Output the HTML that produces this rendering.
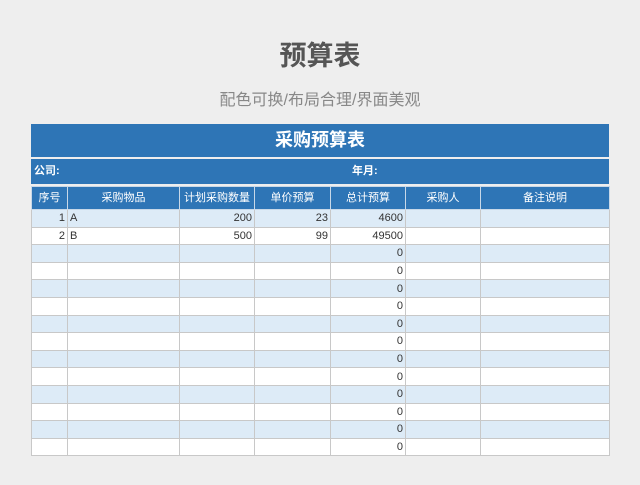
<!DOCTYPE html>
<html><head><meta charset="utf-8"><style>
body{margin:0;width:640px;height:485px;background:#eeeeee;font-family:"Liberation Sans","Noto Sans CJK SC",sans-serif;position:relative;overflow:hidden}
.t1{position:absolute;top:34px;left:0;width:640px;text-align:center;font-size:27px;font-weight:bold;color:#555}
.t2{position:absolute;top:86px;left:0;width:640px;text-align:center;font-size:16px;color:#888}
.bar{position:absolute;left:31px;width:578px;background:#2e75b6;color:#fff;font-weight:bold}
table{position:absolute;left:31px;top:186px;border-collapse:collapse;table-layout:fixed;font-size:11px;color:#333}
td{border:1px solid #c8c8c8;height:17.6px;padding:0 2px;line-height:16px;box-sizing:border-box;text-align:right}
tr{height:17.6px}
tr.h{height:23px}
tr.h td{background:#2e75b6;color:#fff;text-align:center;height:23px;border-color:#c8d8e8}
tr:nth-child(even) td{background:#ddebf7}
tr:nth-child(odd):not(.h) td{background:#fff}
td.l{text-align:left}
</style></head><body>
<div class="t1">预算表</div>
<div class="t2">配色可换/布局合理/界面美观</div>
<div class="bar" style="top:124px;height:33px;font-size:18px;text-align:center;line-height:33px">采购预算表</div>
<div class="bar" style="top:159px;height:25px;font-size:11px;line-height:25px"><span style="margin-left:3px">公司:</span><span style="position:absolute;left:321px">年月:</span></div>
<table>
<colgroup><col style="width:36px"><col style="width:112px"><col style="width:75px"><col style="width:76px"><col style="width:75px"><col style="width:75px"><col style="width:129px"></colgroup>
<tr class="h"><td>序号</td><td>采购物品</td><td>计划采购数量</td><td>单价预算</td><td>总计预算</td><td>采购人</td><td>备注说明</td></tr>
<tr><td>1</td><td class="l">A</td><td>200</td><td>23</td><td>4600</td><td></td><td></td></tr>
<tr><td>2</td><td class="l">B</td><td>500</td><td>99</td><td>49500</td><td></td><td></td></tr>
<tr><td></td><td></td><td></td><td></td><td>0</td><td></td><td></td></tr>
<tr><td></td><td></td><td></td><td></td><td>0</td><td></td><td></td></tr>
<tr><td></td><td></td><td></td><td></td><td>0</td><td></td><td></td></tr>
<tr><td></td><td></td><td></td><td></td><td>0</td><td></td><td></td></tr>
<tr><td></td><td></td><td></td><td></td><td>0</td><td></td><td></td></tr>
<tr><td></td><td></td><td></td><td></td><td>0</td><td></td><td></td></tr>
<tr><td></td><td></td><td></td><td></td><td>0</td><td></td><td></td></tr>
<tr><td></td><td></td><td></td><td></td><td>0</td><td></td><td></td></tr>
<tr><td></td><td></td><td></td><td></td><td>0</td><td></td><td></td></tr>
<tr><td></td><td></td><td></td><td></td><td>0</td><td></td><td></td></tr>
<tr><td></td><td></td><td></td><td></td><td>0</td><td></td><td></td></tr>
<tr><td></td><td></td><td></td><td></td><td>0</td><td></td><td></td></tr>
</table>
</body></html>
